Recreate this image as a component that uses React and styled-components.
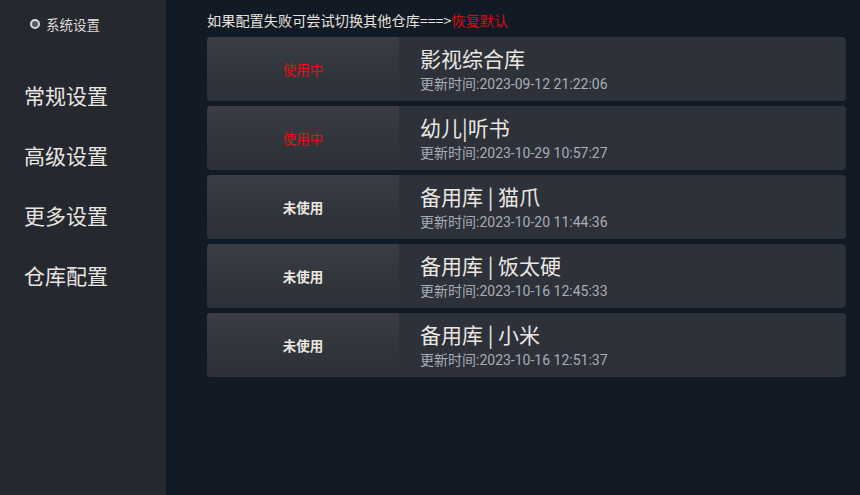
import React from "react";
import styled, { createGlobalStyle } from "styled-components";

const Global = createGlobalStyle`
  html, body { margin: 0; padding: 0; background: #121a25; }
  body { font-family: "Roboto", "Noto Sans CJK SC", sans-serif; }
`;

const Page = styled.div`
  width: 860px;
  height: 495px;
  display: flex;
  background: #121a25;
  overflow: hidden;
`;

const Sidebar = styled.div`
  width: 166px;
  flex-shrink: 0;
  background: #25282f;
  display: flex;
  flex-direction: column;
`;

const SideHeader = styled.div`
  display: flex;
  align-items: center;
  gap: 6px;
  padding: 14px 0 0 30px;
  height: 20px;
  font-family: "Noto Sans CJK SC", sans-serif;
  font-size: 13.5px;
  color: #dedbd5;
`;

const Dot = styled.span`
  width: 10px;
  height: 10px;
  border-radius: 50%;
  border: 2px solid #d8d8dc;
  box-sizing: border-box;
  background: #555a62;
`;

const Menu = styled.div`
  display: flex;
  flex-direction: column;
  padding: 46px 0 0 24px;
  gap: 30px;
`;

const MenuItem = styled.div`
  font-family: "Noto Sans CJK SC", sans-serif;
  font-size: 21px;
  line-height: 30px;
  color: #e9e6e1;
`;

const Main = styled.div`
  flex: 1;
  padding: 9px 14px 0 41px;
  display: flex;
  flex-direction: column;
`;

const Notice = styled.div`
  font-family: "Noto Sans CJK SC", sans-serif;
  font-size: 14.2px;
  line-height: 22px;
  color: #e6e3de;
  margin-bottom: 6px;
`;

const Red = styled.span`
  color: #d41010;
`;

const List = styled.div`
  display: flex;
  flex-direction: column;
  gap: 5px;
`;

const Card = styled.div`
  height: 64px;
  display: flex;
  border-radius: 4px;
  overflow: hidden;
  background: #2c313a;
`;

const Status = styled.div`
  width: 192px;
  flex-shrink: 0;
  display: flex;
  align-items: center;
  justify-content: center;
  background: linear-gradient(180deg, #3a3d44 0%, #30343b 60%, #2c3038 100%);
  font-family: "Noto Sans CJK SC", sans-serif;
  font-size: 13.5px;
  font-weight: ${(p) => (p.$active ? 400 : 700)};
  color: ${(p) => (p.$active ? "#e41212" : "#ece8e0")};
`;

const Info = styled.div`
  flex: 1;
  display: flex;
  flex-direction: column;
  justify-content: center;
  padding-left: 21px;
`;

const Title = styled.div`
  font-family: "Noto Sans CJK SC", sans-serif;
  font-size: 21px;
  line-height: 26px;
  color: #ebe7e0;
`;

const Sub = styled.div`
  font-family: "Roboto", "Noto Sans CJK SC", sans-serif;
  font-size: 14px;
  line-height: 18px;
  margin-top: 4px;
  color: #a9adb5;
`;

const items = [
  { name: "影视综合库", time: "2023-09-12 21:22:06", active: true },
  { name: "幼儿|听书", time: "2023-10-29 10:57:27", active: true },
  { name: "备用库 | 猫爪", time: "2023-10-20 11:44:36", active: false },
  { name: "备用库 | 饭太硬", time: "2023-10-16 12:45:33", active: false },
  { name: "备用库 | 小米", time: "2023-10-16 12:51:37", active: false },
];

export default function App() {
  return (
    <Page>
      <Global />
      <Sidebar>
        <SideHeader>
          <Dot />
          系统设置
        </SideHeader>
        <Menu>
          <MenuItem>常规设置</MenuItem>
          <MenuItem>高级设置</MenuItem>
          <MenuItem>更多设置</MenuItem>
          <MenuItem>仓库配置</MenuItem>
        </Menu>
      </Sidebar>
      <Main>
        <Notice>
          如果配置失败可尝试切换其他仓库===&gt;<Red>恢复默认</Red>
        </Notice>
        <List>
          {items.map((it) => (
            <Card key={it.name}>
              <Status $active={it.active}>{it.active ? "使用中" : "未使用"}</Status>
              <Info>
                <Title>{it.name}</Title>
                <Sub>更新时间:{it.time}</Sub>
              </Info>
            </Card>
          ))}
        </List>
      </Main>
    </Page>
  );
}
